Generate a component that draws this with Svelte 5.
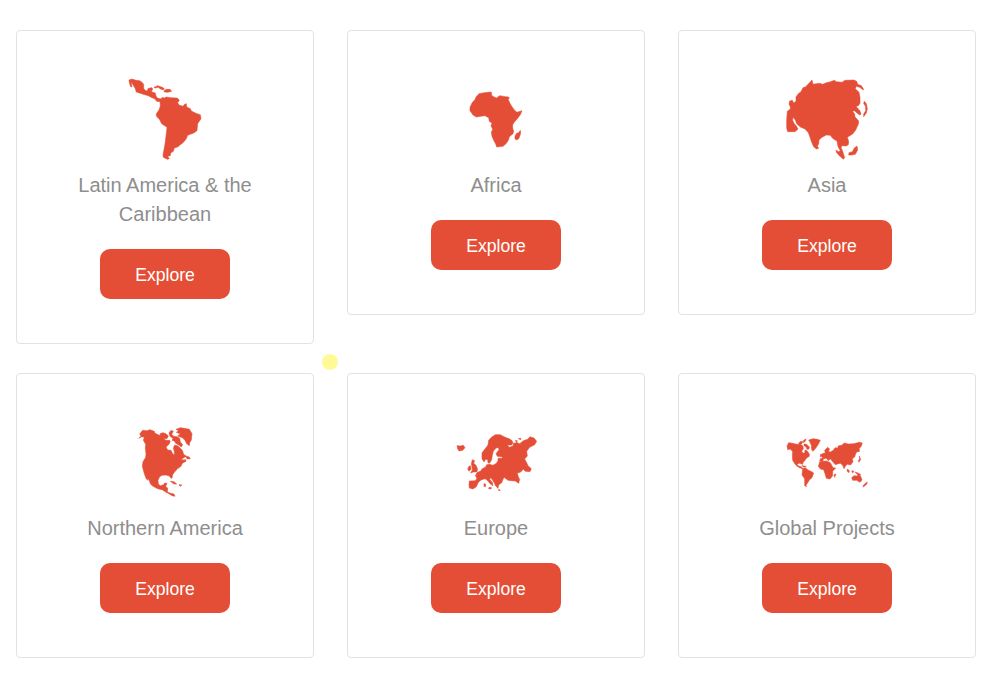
<script>
  const regions = [
    {
      name: 'Latin America & the Caribbean',
      view: '15 27 240 240',
      shapes: [
        'M27 30L36 27L48 31L59 32L66 37L71 43L71 55L75 61L81 63L85 55L96 53L98 57L94 65L106 69L108 78L112 84L123 87L127 82L133 84L139 81L152 83L172 84L178 91L173 98L177 105L189 109L194 103L199 101L200 111L211 116L214 123L231 131L241 134L243 146L233 161L231 182L221 189L203 196L198 208L189 218L179 226L174 230L162 235L161 243L152 249L151 257L143 259L148 266L142 268L130 262L129 254L135 222L139 190L141 172L125 161L119 149L109 138L109 131L117 120L121 108L120 95L110 94L105 87L93 82L85 77L74 74L58 69L49 66L45 54L37 41L33 35L36 51L32 50L28 38Z',
        'M102 52L113 47L127 52L133 56L130 60L120 56L115 52L104 54Z',
        'M132 62L139 58L150 58L155 64L143 67L133 66Z'
      ]
    },
    {
      name: 'Africa',
      view: '-12 -15 240 240',
      shapes: [
        'M57 29L73 26L91 24L95 26L94 33L101 38L109 42L115 38L119 35L137 38L146 39L148 43L144 45L151 60L158 71L165 80L171 85L186 80L181 92L172 104L164 113L158 122L158 132L161 142L159 149L148 158L145 169L138 179L129 187L110 189L107 180L101 169L96 157L94 145L98 136L93 125L96 118L88 112L86 101L75 95L62 97L49 99L39 93L30 80L30 70L36 57L46 45L48 39Z',
        'M181 139L182 148L177 163L171 168L165 165L165 156L170 148L176 146Z'
      ]
    },
    {
      name: 'Asia',
      view: '21 21 240 240',
      shapes: [
        'M96 24L99 37L109 35L119 34L128 37L139 32L149 30L163 25L169 29L186 31L195 25L221 24L230 28L233 37L244 41L250 50L250 54L239 46L229 43L226 50L237 61L240 76L240 94L235 101L228 103L240 117L243 127L239 129L230 122L223 116L218 118L224 126L225 134L236 147L235 157L227 174L218 186L208 192L202 196L206 208L205 218L198 222L187 221L183 226L188 238L194 257L190 262L178 251L169 241L168 234L175 239L181 236L174 224L171 207L164 203L157 198L151 190L139 189L126 196L117 204L116 216L112 222L116 229L109 231L101 224L95 211L89 193L85 182L75 171L61 165L50 155L46 144L39 136L38 145L42 154L49 162L54 171L45 179L23 179L20 168L20 143L22 118L31 111L31 105L27 96L29 87L37 85L41 93L48 88L48 75L55 65L63 59L69 47L77 44L87 34Z',
        'M253 88L259 95L262 110L259 123L251 134L251 126L257 116L257 104L251 94Z',
        'M231 222L233 234L226 247L215 249L206 249L207 242L217 239L223 228Z'
      ]
    },
    {
      name: 'Northern America',
      view: '-15 6 240 240',
      shapes: [
        'M38 31L50 32L60 29L73 34L75 40L87 45L97 51L106 60L115 62L119 69L115 75L108 81L113 90L123 91L127 100L133 105L133 94L130 85L134 75L144 78L151 85L157 91L161 103L168 109L160 114L153 120L167 119L168 124L157 130L153 139L144 145L133 157L128 164L126 174L123 175L118 168L108 165L96 166L89 170L84 181L85 192L91 197L101 194L104 189L111 190L107 200L113 204L112 216L122 220L132 222L135 229L126 227L118 222L107 216L98 210L83 206L69 199L62 193L57 180L50 170L49 163L54 181L49 177L44 164L40 151L37 139L39 125L47 112L48 101L46 86L47 73L40 61L43 52L35 50L26 55L33 48L29 42Z',
        'M138 28L151 23L163 25L178 28L186 41L184 60L179 68L178 77L170 71L165 61L157 53L143 48L151 42L139 37L146 32Z',
        'M90 41L99 38L108 41L115 48L111 56L99 55L91 51Z M117 39L123 31L130 34L125 43L131 49L141 50L149 55L151 66L158 74L154 81L146 75L137 70L133 63L126 61L129 55L120 49Z M107 66L118 60L121 66L113 71Z M165 107L178 111L181 116L172 117Z M121 184L132 185L140 192L132 192Z M147 194L156 195L150 199Z'
      ]
    },
    {
      name: 'Europe',
      view: '18 -12 240 240',
      shapes: [
        'M96 80L105 69L114 57L116 43L124 34L136 26L151 26L162 32L180 40L189 49L185 57L172 57L178 64L189 60L190 52L202 50L209 53L220 44L233 40L240 32L252 36L260 46L254 56L239 64L230 76L232 90L224 99L230 110L234 119L244 128L240 137L226 136L220 130L211 139L202 141L205 153L209 160L206 172L196 165L185 164L174 163L162 154L158 163L155 170L146 177L144 187L137 180L133 171L126 160L121 155L119 160L127 169L129 179L121 174L111 162L105 158L93 162L85 169L79 182L69 189L58 186L57 176L58 165L76 164L81 156L76 149L82 139L91 136L97 128L107 123L110 116L119 115L128 118L138 113L144 104L144 97L156 97L158 93L142 91L138 83L147 71L145 65L138 66L130 76L127 88L125 101L119 111L114 111L113 101L107 100L102 108L96 98Z',
        'M21 59L31 60L40 58L45 65L38 73L27 75L23 68Z',
        'M67 101L74 104L71 112L78 118L83 130L80 138L70 138L62 141L67 132L66 122L64 113Z M57 121L62 119L63 130L57 136L53 129Z M102 173L107 174L106 183L102 181Z M117 184L125 185L123 189L116 188Z M162 37L178 39L187 45L178 48L166 43Z M196 43L202 44L200 50Z M205 38L213 37L212 41Z M146 190L151 193L146 194Z'
      ]
    },
    {
      name: 'Global Projects',
      view: '21 -24 240 240',
      shapes: [
        'M21 48L26 38L38 40L50 43L61 43L69 48L70 57L65 63L69 70L74 68L75 60L81 62L88 72L88 79L79 85L75 91L69 98L68 103L58 100L51 103L54 107L65 111L68 116L58 113L49 107L43 99L38 91L37 76L38 65L31 57L23 59Z',
        'M56 40L60 35L68 34L66 41L59 44Z M71 31L78 27L76 34L70 38Z M72 42L80 43L88 51L87 57L81 58L78 51L72 47Z M86 30L99 26L112 28L121 31L115 43L107 55L99 64L95 59L94 46L90 37Z',
        'M68 115L77 114L84 120L91 123L101 129L96 143L88 150L84 157L78 166L80 170L74 167L74 146L66 135Z',
        'M119 96L127 94L140 93L151 98L159 113L167 114L158 124L158 137L150 147L139 145L135 131L131 119L121 117L115 109Z',
        'M119 94L121 86L128 84L122 74L130 70L136 69L134 61L143 52L149 57L145 64L151 66L160 61L165 53L174 54L174 48L185 46L193 39L205 42L221 41L238 37L247 39L243 50L238 55L238 65L231 65L227 71L224 81L217 86L219 95L212 105L202 103L197 107L192 116L188 106L181 100L175 101L166 104L157 94L151 86L145 92L139 85L130 86L129 93Z',
        'M215 143L222 137L230 138L237 132L243 141L246 150L240 157L230 151L218 151Z M202 117L208 122L207 128L201 123Z M215 122L222 124L218 129Z M225 126L236 130L243 135L231 133Z M238 78L242 88L237 97L235 92L239 86Z M164 132L168 133L164 142L162 138Z M256 160L262 156L260 163L250 171L249 167Z M122 73L126 77L121 81Z M65 107L74 108L79 111L72 111Z'
      ]
    }
  ];
</script>

<main>
  {#each regions as region}
    <article>
      <svg viewBox={region.view} aria-hidden="true">
        {#each region.shapes as d}
          <path {d} />
        {/each}
      </svg>
      <h2>{region.name}</h2>
      <button type="button">Explore</button>
    </article>
  {/each}
  <span class="pointer"></span>
</main>

<style>
  :global(body) {
    margin: 0;
    background: #fff;
  }
  main {
    position: relative;
    box-sizing: border-box;
    width: 1000px;
    height: 693px;
    padding: 30px 24px 0 16px;
    display: grid;
    grid-template-columns: repeat(3, 298px);
    column-gap: 33px;
    row-gap: 29px;
    align-items: start;
    align-content: start;
    font-family: "Liberation Sans", Arial, sans-serif;
  }
  article {
    box-sizing: border-box;
    border: 1px solid #e2e2e2;
    border-radius: 4px;
    padding: 48px 48px 44px;
    display: flex;
    flex-direction: column;
    align-items: center;
  }
  svg {
    width: 80px;
    height: 80px;
    overflow: visible;
    fill: #e54e36;
    stroke: #e54e36;
    stroke-width: 1.6;
    stroke-linejoin: round;
  }
  h2 {
    margin: 12px 0 20px;
    font-size: 20px;
    line-height: 29px;
    font-weight: 400;
    text-align: center;
    color: #8e8e8e;
  }
  button {
    width: 130px;
    height: 50px;
    padding: 2px 0 0;
    border: 0;
    border-radius: 10px;
    background: #e54e36;
    color: #fff;
    font: 17.6px/48px "Liberation Sans", Arial, sans-serif;
  }
  .pointer {
    position: absolute;
    left: 322px;
    top: 354px;
    width: 16px;
    height: 16px;
    border-radius: 50%;
    background: #fffa96;
  }
</style>
